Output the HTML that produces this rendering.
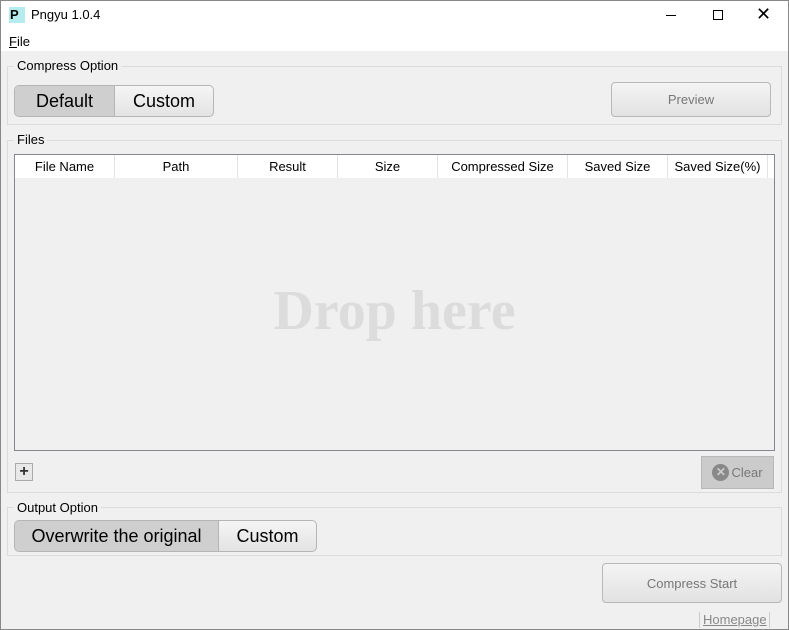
<!DOCTYPE html>
<html><head><meta charset="utf-8"><style>
*{box-sizing:border-box;margin:0;padding:0}
body{width:789px;height:630px;background:#f0f0f0;font-family:"Liberation Sans",sans-serif;font-size:13px;color:#000;position:relative;overflow:hidden}
.abs{position:absolute}
.win{left:0;top:0;width:789px;height:630px;border:1px solid #888}
.title{left:1px;top:1px;width:787px;height:30px;background:#fff}
.menu{left:1px;top:31px;width:787px;height:20px;background:#fff}
.grp{border:1px solid #dcdcdc}
.gl{background:#f0f0f0;padding:0 3px;font-size:13px}
.seg{border:1px solid #b5b5b5;border-radius:5px;display:flex;overflow:hidden;font-size:18px;background:linear-gradient(#f5f5f5,#e3e3e3)}
.seg div{display:flex;align-items:center;justify-content:center}
.seg .on{background:#cfcfcf;border-right:1px solid #b5b5b5}
.btn{border:1px solid #b8b8b8;border-radius:4px;background:linear-gradient(#f4f4f4,#e2e2e2);color:#777;display:flex;align-items:center;justify-content:center;font-size:13px}
.hdr{display:flex;height:24px;background:#fff;border-bottom:1px solid #f0f0f0}
.hdr div{border-right:1px solid #e3e3e3;display:flex;align-items:center;justify-content:center;font-size:13px}
</style></head><body>
<div class="abs win"></div>
<div class="abs title"></div>
<div class="abs" style="left:9px;top:7px;width:16px;height:16px;background:#b6ecee;font-weight:bold;font-size:13px;line-height:16px;padding-left:1px">P</div>
<div class="abs" style="left:31px;top:7px;font-size:13px">Pngyu 1.0.4</div>
<div class="abs" style="left:666px;top:15px;width:10px;height:1px;background:#000"></div>
<div class="abs" style="left:713px;top:10px;width:10px;height:10px;border:1px solid #000"></div>
<div class="abs" style="left:756px;top:4px;font-size:18px;line-height:20px">✕</div>
<div class="abs menu"></div>
<div class="abs" style="left:9px;top:34px"><u>F</u>ile</div>

<div class="abs grp" style="left:7px;top:66px;width:775px;height:59px"></div>
<div class="abs gl" style="left:14px;top:58px">Compress Option</div>
<div class="abs seg" style="left:14px;top:85px;width:200px;height:32px"><div class="on" style="width:100px">Default</div><div style="flex:1">Custom</div></div>
<div class="abs btn" style="left:611px;top:82px;width:160px;height:35px">Preview</div>

<div class="abs grp" style="left:7px;top:140px;width:775px;height:353px"></div>
<div class="abs gl" style="left:14px;top:132px">Files</div>
<div class="abs" style="left:14px;top:154px;width:761px;height:297px;border:1px solid #828790;background:#f0f0f0">
<div class="hdr">
<div style="width:100px">File Name</div><div style="width:123px">Path</div><div style="width:100px">Result</div><div style="width:100px">Size</div><div style="width:130px">Compressed Size</div><div style="width:100px">Saved Size</div><div style="width:100px">Saved Size(%)</div>
</div>
<div class="abs" style="left:0;top:124px;width:100%;text-align:center;font-family:'Liberation Serif',serif;font-weight:bold;font-size:56px;color:#dcdcdc">Drop here</div>
</div>
<div class="abs" style="left:15px;top:463px;width:18px;height:18px;border:1px solid #aaa;background:#e8e8e8;text-align:center;font-weight:bold;font-size:16px;line-height:15px;color:#333">+</div>
<div class="abs" style="left:701px;top:456px;width:73px;height:33px;background:#cbcbcb;border:1px solid #b8b8b8;color:#777;display:flex;align-items:center;justify-content:center;gap:2px"><span style="display:inline-block;width:17px;height:17px;border-radius:50%;background:#888;color:#cbcbcb;font-size:12px;line-height:17px;text-align:center;font-weight:bold">✕</span>Clear</div>

<div class="abs grp" style="left:7px;top:507px;width:775px;height:49px"></div>
<div class="abs gl" style="left:14px;top:500px">Output Option</div>
<div class="abs seg" style="left:14px;top:520px;width:303px;height:32px"><div class="on" style="width:204px">Overwrite the original</div><div style="flex:1">Custom</div></div>

<div class="abs btn" style="left:602px;top:563px;width:180px;height:40px">Compress Start</div>
<div class="abs" style="left:699px;top:612px;width:1px;height:16px;background:#ccc"></div>
<div class="abs" style="left:703px;top:612px;color:#888;text-decoration:underline">Homepage</div>
<div class="abs" style="left:769px;top:612px;width:1px;height:16px;background:#ccc"></div>
</body></html>
